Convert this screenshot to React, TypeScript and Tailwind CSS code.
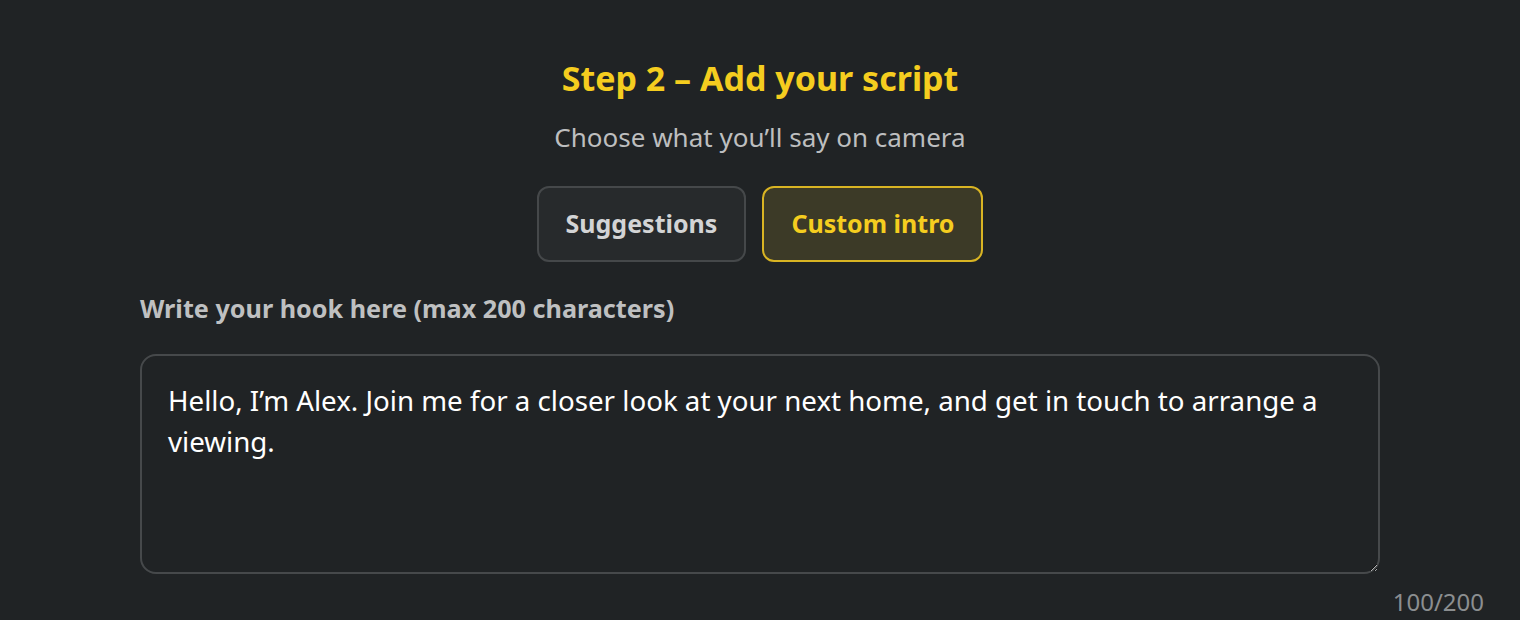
import { useState } from "react";

const initial =
  "Hello, I’m Alex. Join me for a closer look at your next home, and get in touch to arrange a viewing.";

export default function App() {
  const [mode, setMode] = useState<"suggestions" | "custom">("custom");
  const [text, setText] = useState(initial);

  return (
    <div
      className="min-h-[620px] w-full bg-[#202325] pt-[56px] text-[#c4c5c6]"
      style={{ fontFamily: '"Noto Sans", "Open Sans", sans-serif' }}
    >
      <h1 className="text-center text-[34px] font-bold leading-[44px] text-[#f5cd1f]">
        Step 2 – Add your script
      </h1>
      <p className="mt-[21px] text-center text-[26px] leading-[32px] text-[#bdbebf]">
        Choose what you’ll say on camera
      </p>

      <div className="mt-[33px] flex justify-center gap-4">
        <button
          type="button"
          onClick={() => setMode("suggestions")}
          className={[
            "h-[76px] rounded-[12px] border-2 px-[27px] text-[25px] font-bold",
            mode === "suggestions"
              ? "border-[#d9b423] bg-[#3c3a27] text-[#f5cd1f]"
              : "border-[#45484a] bg-[#272a2c] text-[#d3d4d5]"
          ].join(" ")}
        >
          Suggestions
        </button>
        <button
          type="button"
          onClick={() => setMode("custom")}
          className={[
            "h-[76px] rounded-[12px] border-2 px-[27px] text-[25px] font-bold",
            mode === "custom"
              ? "border-[#d9b423] bg-[#3c3a27] text-[#f5cd1f]"
              : "border-[#45484a] bg-[#272a2c] text-[#d3d4d5]"
          ].join(" ")}
        >
          Custom intro
        </button>
      </div>

      <div className="mx-auto mt-[30px] w-[1240px]">
        <label className="block text-[25.2px] font-bold leading-[32px] text-[#bfc0c1]">
          Write your hook here (max 200 characters)
        </label>
        <textarea
          value={text}
          maxLength={200}
          onChange={(e) => setText(e.target.value)}
          className="mt-[30px] block h-[220px] w-full resize-y rounded-[16px] border-2 border-[#46494b] bg-[#202325] px-[26px] pt-[24px] text-[27.7px] leading-[41px] text-white outline-none"
        />
      </div>
      <div className="pr-[36px] pt-[13px] text-right text-[24px] leading-[30px] text-[#8b8e90]">
        {text.length}/200
      </div>
    </div>
  );
}
